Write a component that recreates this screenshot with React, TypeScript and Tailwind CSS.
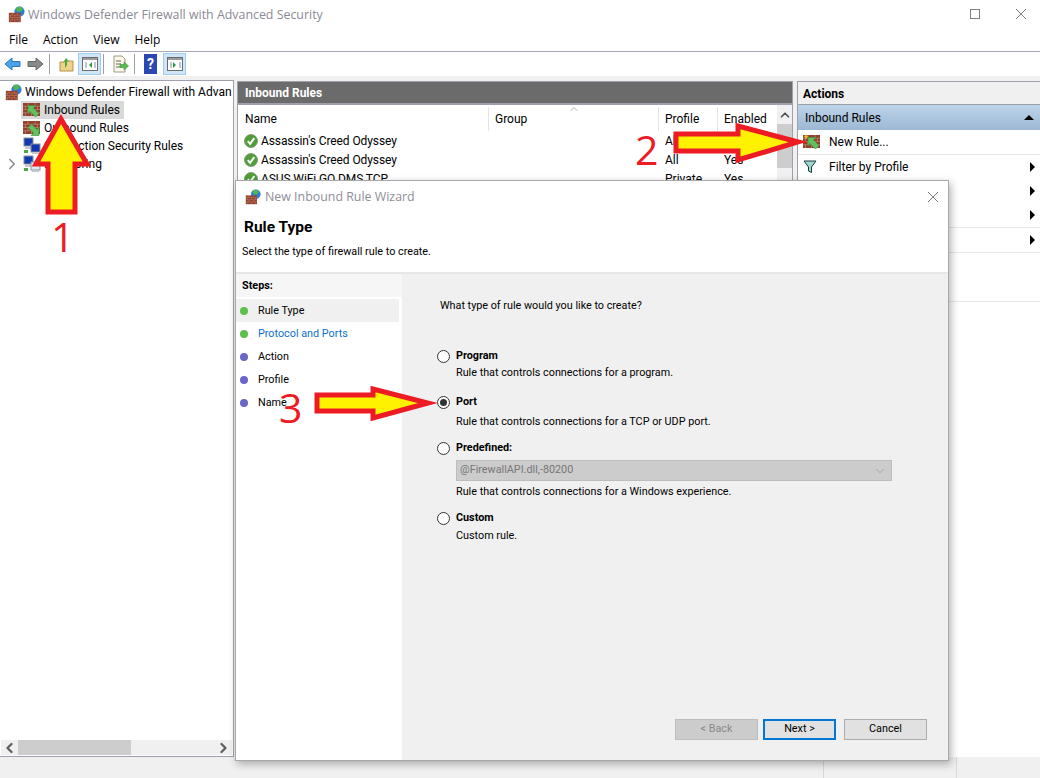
import React from "react";
import { ChevronLeft, ChevronRight, ChevronUp, ChevronDown } from "lucide-react";

const FONT_OPEN = "font-['Open_Sans','Noto_Sans',sans-serif]";

// Small bitmap-like app icons
function Bricks({ x = 0, y = 0, w = 14, h = 12 }: { x?: number; y?: number; w?: number; h?: number }) {
  return (
    <g transform={`translate(${x} ${y}) scale(${w / 14} ${h / 12})`}>
      <rect width="14" height="12" fill="#93402c" />
      <path d="M0 3h14M0 6h14M0 9h14M4 0v3M10 0v3M2 3v3M7 3v3M12 3v3M4 6v3M10 6v3M2 9v3M7 9v3M12 9v3" stroke="#c99a86" strokeWidth="0.5" />
    </g>
  );
}

function FirewallIcon({ className }: { className?: string }) {
  return (
    <svg viewBox="0 0 20 20" className={className}>
      <circle cx="13.500" cy="6.500" r="6" fill="#2f7fd6" />
      <path d="M10 2c2-1.500 6-1.500 7 1s-2 3-4 4-4-3-3-5z" fill="#54b848" />
      <Bricks x={1} y={8} w={14} h={11} />
    </svg>
  );
}

function RuleIcon({ down, star }: { down?: boolean; star?: boolean }) {
  return (
    <svg viewBox="0 0 18 16" className="h-4 w-[18px] shrink-0">
      <Bricks x={0} y={1} w={17} h={13} />
      {star && <path d="M3 0l.8 1.800L5.600 2 4 3.200l.5 1.800L3 4l-1.500 1L2 3.200.4 2l1.800-.2z" fill="#f4b428" />}
      {down ? (
        <path d="M16 15.500H8l2.500-2.500L5 7.500 8.500 4 14 9.500 16 7z" fill="#62c05e" stroke="#2f8f3f" strokeWidth="0.6" />
      ) : (
        <path d="M5 3.500h8L10.500 6 16 11.500 12.500 15 7 9.500 5 12z" fill="#62c05e" stroke="#2f8f3f" strokeWidth="0.6" />
      )}
    </svg>
  );
}

function MonitorsIcon({ green }: { green?: boolean }) {
  return (
    <svg viewBox="0 0 18 18" className="h-[18px] w-[18px] shrink-0">
      <rect x="1" y="1" width="9" height="8" fill="#1238b0" stroke="#8a8f98" />
      <rect x="2" y="10" width="7" height="2" fill="#c4c8cf" />
      <rect x="8" y="7" width="9" height="8" fill={green ? "#dfe8f2" : "#1238b0"} stroke="#8a8f98" />
      <rect x="9" y="15" width="7" height="2" fill="#c4c8cf" />
      <rect x="1" y="13" width="4" height="3" fill="#4aa83f" />
    </svg>
  );
}

function CheckBadge() {
  return (
    <svg viewBox="0 0 14 14" className="h-[14px] w-[14px] shrink-0">
      <circle cx="7" cy="7" r="6.500" fill="#4f9e37" stroke="#7d8f73" strokeWidth="0.8" />
      <path d="M3.800 7.200l2.300 2.600 4.200-5.600" fill="none" stroke="#fff" strokeWidth="2" />
    </svg>
  );
}

function ThinX({ className }: { className?: string }) {
  return (
    <svg viewBox="0 0 10 10" className={`size-[10px] ${className ?? ""}`}>
      <path d="M0 0L10 10M10 0L0 10" stroke="#808080" strokeWidth="1" />
    </svg>
  );
}

function ToggleIcon({ side, className }: { side: "left" | "right"; className: string }) {
  return (
    <div className={`flex h-[22px] w-[23px] items-center justify-center border border-[#9fcdf0] bg-[#cfe6f8] ${className}`}>
      <svg viewBox="0 0 16 14" className="h-[14px] w-4">
        <rect x="0.500" y="0.500" width="15" height="13" fill="#fff" stroke="#6b6b6b" />
        <rect x="1" y="1" width="14" height="2" fill="#9a9a9a" />
        <path d="M3 6h2M3 8h2M3 10h2M12 6h2M12 8h2M12 10h2" stroke="#7a8fa8" />
        {side === "left" ? <path d="M10 5v6L7 8z" fill="#2f9a3a" /> : <path d="M6 5v6l3-3z" fill="#2f9a3a" />}
      </svg>
    </div>
  );
}

function Toolbar() {
  return (
    <div className="flex h-[24px] shrink-0 items-center bg-white pl-1">
      <svg viewBox="0 0 17 14" className="h-[14px] w-[17px]">
        <path d="M8 1L1 7l7 6V9.500h8v-5H8z" fill="#4da3e8" stroke="#2a79bf" />
      </svg>
      <svg viewBox="0 0 17 14" className="ml-[6px] h-[14px] w-[17px]">
        <path d="M9 1l7 6-7 6V9.500H1v-5h8z" fill="#8a8a8a" stroke="#666" />
      </svg>
      <div className="ml-[5px] h-[20px] w-px bg-[#a0a0a0]" />
      <svg viewBox="0 0 15 16" className="ml-[9px] h-4 w-[15px]">
        <path d="M1 6h4l1-1h8v10H1z" fill="#f0d38a" stroke="#b2924a" />
        <path d="M6 12V6L4 7l3-5 3 3.500-2-.5v4z" fill="#4aa83f" />
      </svg>
      <ToggleIcon side="left" className="ml-[4px]" />
      <div className="ml-[2px] h-[20px] w-px bg-[#a0a0a0]" />
      <svg viewBox="0 0 17 18" className="ml-2 h-[18px] w-[17px]">
        <path d="M2 1h8l3 3v13H2z" fill="#fbf8e8" stroke="#9a9a88" />
        <path d="M4 6h5M4 9h5M4 12h5" stroke="#666" />
        <path d="M8 9.500h4V7l4.500 4-4.500 4v-2.500H8z" fill="#57bd4a" stroke="#3a933a" strokeWidth="0.6" />
      </svg>
      <div className="ml-[5px] h-[20px] w-px bg-[#a0a0a0]" />
      <div className="ml-[9px] flex h-[20px] w-[13px] items-center justify-center bg-[#2b48b0] text-[14px] leading-none font-bold text-white">?</div>
      <ToggleIcon side="right" className="ml-[6px]" />
    </div>
  );
}

function TreeRow({ icon, label, selected, caret }: { icon: React.ReactNode; label: string; selected?: boolean; caret?: boolean }) {
  return (
    <div className="relative flex h-[18px] items-center pl-[21px]">
      {caret && <ChevronRight className="absolute top-0 left-[3px] size-[18px] text-[#8a8a8a]" strokeWidth={2} />}
      <div className={`flex h-[18px] items-center gap-[3px] pr-1 pl-[2px] ${selected ? "bg-[#d9d9d9]" : ""}`}>
        {icon}
        <span>{label}</span>
      </div>
    </div>
  );
}

function ActionRow({ icon, label, arrow, bottom }: { icon?: React.ReactNode; label?: string; arrow?: boolean; bottom?: boolean }) {
  return (
    <div className={`flex h-[24.500px] items-center pr-[5px] pl-[5px] ${bottom ? "border-b border-[#e8e8e8]" : ""}`}>
      <div className="flex w-[26px] items-center">{icon}</div>
      <span className="flex-1">{label}</span>
      {arrow && <div className="h-0 w-0 border-y-[5px] border-l-[5px] border-y-transparent border-l-black" />}
    </div>
  );
}

function RuleRow({ name, profile, enabled }: { name: string; profile: string; enabled: string }) {
  return (
    <div className="flex h-[19px] items-center pl-[6px]">
      <CheckBadge />
      <span className="ml-[3px] w-[404px] tracking-[-0.1px]">{name}</span>
      <span className="w-[59px]">{profile}</span>
      <span>{enabled}</span>
    </div>
  );
}

function StepRow({ label, color, selected, link }: { label: string; color: string; selected?: boolean; link?: boolean }) {
  return (
    <div className={`flex h-[23px] items-center pl-[4px] ${selected ? "bg-[#f0f0f0]" : ""}`}>
      <div className={`size-2 rounded-full ${color}`} />
      <span className={`mt-px ml-[10px] ${link ? "text-[#0b6fd0]" : ""}`}>{label}</span>
    </div>
  );
}

function Radio({ checked }: { checked?: boolean }) {
  return (
    <div className="flex size-[13px] shrink-0 items-center justify-center rounded-full border border-[#333] bg-white">
      {checked && <div className="size-[7px] rounded-full bg-[#333]" />}
    </div>
  );
}

function RuleOption({ label, hint, checked, className, hintClass, children }: { label: string; hint: string; checked?: boolean; className: string; hintClass: string; children?: React.ReactNode }) {
  return (
    <div className={className}>
      <div className="flex h-[16px] items-center gap-[6px]">
        <Radio checked={checked} />
        <span className="font-bold">{label}</span>
      </div>
      {children}
      <div className={`pl-[19px] leading-[16px] ${hintClass}`}>{hint}</div>
    </div>
  );
}

function WizardButton({ label, look }: { label: string; look: string }) {
  return <div className={`flex h-[21px] items-center justify-center ${look}`}>{label}</div>;
}

function Wizard() {
  return (
    <div className="absolute top-[180px] left-[235px] flex h-[581px] w-[714px] flex-col border border-[#a8a8a8] bg-white text-[10.800px] shadow-[2px_3px_8px_rgba(0,0,0,0.3)]">
      <div className="flex h-[31px] shrink-0 items-center pl-[9px] text-[#8f8f99]">
        <FirewallIcon className="size-4" />
        <span className={`mt-[2px] ml-[4px] text-[12.400px] ${FONT_OPEN}`}>New Inbound Rule Wizard</span>
        <ThinX className="mr-[10px] ml-auto" />
      </div>
      <div className="h-[62px] shrink-0 border-b-2 border-[#e6e6e6] pl-[6px]">
        <div className="mt-[5px] ml-[2px] text-[15.500px] leading-5 font-bold">Rule Type</div>
        <div className="mt-[7px] leading-4">Select the type of firewall rule to create.</div>
      </div>
      <div className="flex min-h-0 flex-1 bg-[#f0f0f0]">
        <div className="mr-[1px] w-[166px] shrink-0 bg-white">
          <div className="mb-[2px] flex h-[23px] items-center bg-[#f6f6f6] pt-px pl-[6px] font-bold">Steps:</div>
          <div className="w-[163px]">
            <StepRow label="Rule Type" color="bg-[#5cc04c]" selected />
            <StepRow label="Protocol and Ports" color="bg-[#5cc04c]" link />
            <StepRow label="Action" color="bg-[#6a66c8]" />
            <StepRow label="Profile" color="bg-[#6a66c8]" />
            <StepRow label="Name" color="bg-[#6a66c8]" />
          </div>
        </div>
        <div className="flex min-w-0 flex-1 flex-col pl-[34px]">
          <div className="mt-[24px] pl-[3px] leading-4">What type of rule would you like to create?</div>
          <RuleOption className="mt-[34px]" hintClass="mt-px" label="Program" hint="Rule that controls connections for a program." />
          <RuleOption className="mt-[13px]" hintClass="mt-1" label="Port" hint="Rule that controls connections for a TCP or UDP port." checked />
          <RuleOption className="mt-[10px]" hintClass="mt-[3px]" label="Predefined:" hint="Rule that controls connections for a Windows experience.">
            <div className="mt-[4px] ml-[19px] flex h-[21px] w-[436px] items-center border border-[#bdbdbd] bg-[#cccccc] pr-[4px] pl-[3px] text-[#767676]">
              <span className="flex-1">@FirewallAPI.dll,-80200</span>
              <ChevronDown className="size-[14px] text-[#8a8a8a]" strokeWidth={1} />
            </div>
          </RuleOption>
          <RuleOption className="mt-[10px]" hintClass="mt-[2px]" label="Custom" hint="Custom rule." />
          <div className="mt-auto mr-[21px] mb-[20px] flex justify-end">
            <WizardButton label="< Back" look="w-[83px] border border-[#bdbdbd] bg-[#cccccc] text-[#8a8a8a]" />
            <WizardButton label="Next >" look="ml-[5px] w-[73px] border-2 border-[#0078d7] bg-[#e1e1e1]" />
            <WizardButton label="Cancel" look="ml-2 w-[83px] border border-[#adadad] bg-[#e1e1e1]" />
          </div>
        </div>
      </div>
    </div>
  );
}

// Red/yellow annotation arrows drawn onto the screenshot
function Annotations() {
  const stroke = { fill: "#fff200", stroke: "#ed1c24", strokeWidth: 5 };
  const number = `absolute text-[41px] leading-[48px] text-[#ed1c24] ${FONT_OPEN}`;
  return (
    <>
      <svg className="pointer-events-none absolute inset-0 h-[778px] w-[1040px]">
        <path d="M61 119L36 164H48V212H75V164H87Z" {...stroke} />
        <path d="M676 134H738V126L798 142L738 160V151H676Z" {...stroke} />
        <path d="M317 395H373V389L428 403L373 418V411H317Z" {...stroke} />
      </svg>
      <div className={`top-[212px] left-[51px] ${number}`}>1</div>
      <div className={`top-[125px] left-[635px] ${number}`}>2</div>
      <div className={`top-[383px] left-[279px] ${number}`}>3</div>
    </>
  );
}

export default function App() {
  return (
    <div className="relative flex h-[778px] w-[1040px] flex-col overflow-hidden bg-white font-['Roboto','Noto_Sans',sans-serif] text-[12px] text-black">
      <div className="flex h-[29px] shrink-0 items-center pl-[8px]">
        <FirewallIcon className="size-[17px]" />
        <span className={`mt-[2px] ml-[3px] text-[12.400px] text-[#8a8a96] ${FONT_OPEN}`}>Windows Defender Firewall with Advanced Security</span>
        <div className="mr-[14px] mb-[2px] ml-auto flex items-center">
          <div className="mr-[36px] size-[10px] border border-[#808080]" />
          <ThinX />
        </div>
      </div>
      <div className={`flex h-[23px] shrink-0 items-center gap-[15px] border-b border-[#a9a9b3] pl-[9px] ${FONT_OPEN}`}>
        <span>File</span>
        <span>Action</span>
        <span>View</span>
        <span>Help</span>
      </div>
      <Toolbar />
      <div className="flex min-h-0 flex-1 bg-[#f0f0f0] pt-[4px]">
        <div className="flex w-[234px] shrink-0 flex-col border-t border-r border-b border-[#a0a0aa] bg-white">
          <div className="flex-1 overflow-hidden pt-[2px] whitespace-nowrap">
            <div className="flex h-[18px] items-center gap-[3px] pl-[5px]">
              <FirewallIcon className="size-[17px] shrink-0" />
              <span>Windows Defender Firewall with Advan</span>
            </div>
            <TreeRow icon={<RuleIcon />} label="Inbound Rules" selected />
            <TreeRow icon={<RuleIcon down />} label="Outbound Rules" />
            <TreeRow icon={<MonitorsIcon />} label="Connection Security Rules" />
            <TreeRow icon={<MonitorsIcon green />} label="Monitoring" caret />
          </div>
          <div className="mx-px mb-[1px] flex h-[15px] items-center bg-[#f0f0f0]">
            <ChevronLeft className="w-[17px] text-[#606060]" size={16} strokeWidth={3.5} />
            <div className="h-full w-[113px] bg-[#cdcdcd]" />
            <div className="flex-1" />
            <ChevronRight className="w-[17px] text-[#606060]" size={16} strokeWidth={3.5} />
          </div>
        </div>
        <div className="mt-px mr-[4px] ml-[3px] flex min-w-0 flex-1 flex-col border border-[#a0a0aa] bg-white">
          <div className="flex h-[23px] shrink-0 items-center border-b-2 border-[#a0a0aa] bg-[#6b6b6b] pl-[7px] font-bold text-white">Inbound Rules</div>
          <div className="flex min-h-0 flex-1">
            <div className="min-w-0 flex-1">
              <div className="relative flex h-[26px] items-end">
                <span className="w-[250px] pl-[7px] leading-[24px]">Name</span>
                <span className="w-[170px] border-l border-[#e4e4e4] pl-[6px] leading-[24px]">Group</span>
                <span className="w-[59px] border-l border-[#e4e4e4] pl-[6px] leading-[24px]">Profile</span>
                <span className="border-l border-[#e4e4e4] pl-[6px] leading-[24px]">Enabled</span>
                <ChevronUp className="absolute top-[-2px] left-[330px] size-3 text-[#606060]" strokeWidth={1} />
              </div>
              <RuleRow name="Assassin's Creed Odyssey" profile="All" enabled="Yes" />
              <RuleRow name="Assassin's Creed Odyssey" profile="All" enabled="Yes" />
              <RuleRow name="ASUS WiFi GO DMS TCP" profile="Private" enabled="Yes" />
            </div>
            <div className="flex w-[15px] shrink-0 flex-col bg-[#f0f0f0]">
              <div className="flex h-[19px] items-center justify-center">
                <ChevronUp className="size-[14px] text-[#505050]" strokeWidth={3} />
              </div>
              <div className="h-[44px] bg-[#cdcdcd]" />
            </div>
          </div>
        </div>
        <div className="mt-px flex w-[243px] shrink-0 flex-col border-t border-l border-[#a0a0aa] bg-white">
          <div className="flex h-[23px] shrink-0 items-center border-b border-[#a0a0aa] bg-[#f0f0f0] pt-px pl-[5px] font-bold">Actions</div>
          <div className="flex h-[25px] shrink-0 items-center justify-between bg-gradient-to-b from-[#bcd4ea] to-[#9db8d4] pr-[6px] pl-[7px]">
            <span>Inbound Rules</span>
            <div className="h-0 w-0 border-x-[5px] border-b-[5px] border-x-transparent border-b-black" />
          </div>
          <ActionRow icon={<RuleIcon star />} label="New Rule..." bottom />
          <ActionRow
            icon={
              <svg viewBox="0 0 14 14" className="size-[14px]">
                <path d="M1 1h12L8.500 7v5.500l-3-1.500V7z" fill="#9ed5cf" stroke="#1a3d3d" />
              </svg>
            }
            label="Filter by Profile"
            arrow
          />
          <ActionRow arrow />
          <ActionRow arrow bottom />
          <ActionRow arrow bottom />
          <div className="h-[49px] border-b border-[#e8e8e8]" />
        </div>
      </div>
      <div className="flex h-[21px] shrink-0 bg-[#f0f0f0]">
        <div className="ml-[823px] h-full w-[134px] border-x border-[#d8d8d8]" />
      </div>
      <Wizard />
      <Annotations />
    </div>
  );
}
